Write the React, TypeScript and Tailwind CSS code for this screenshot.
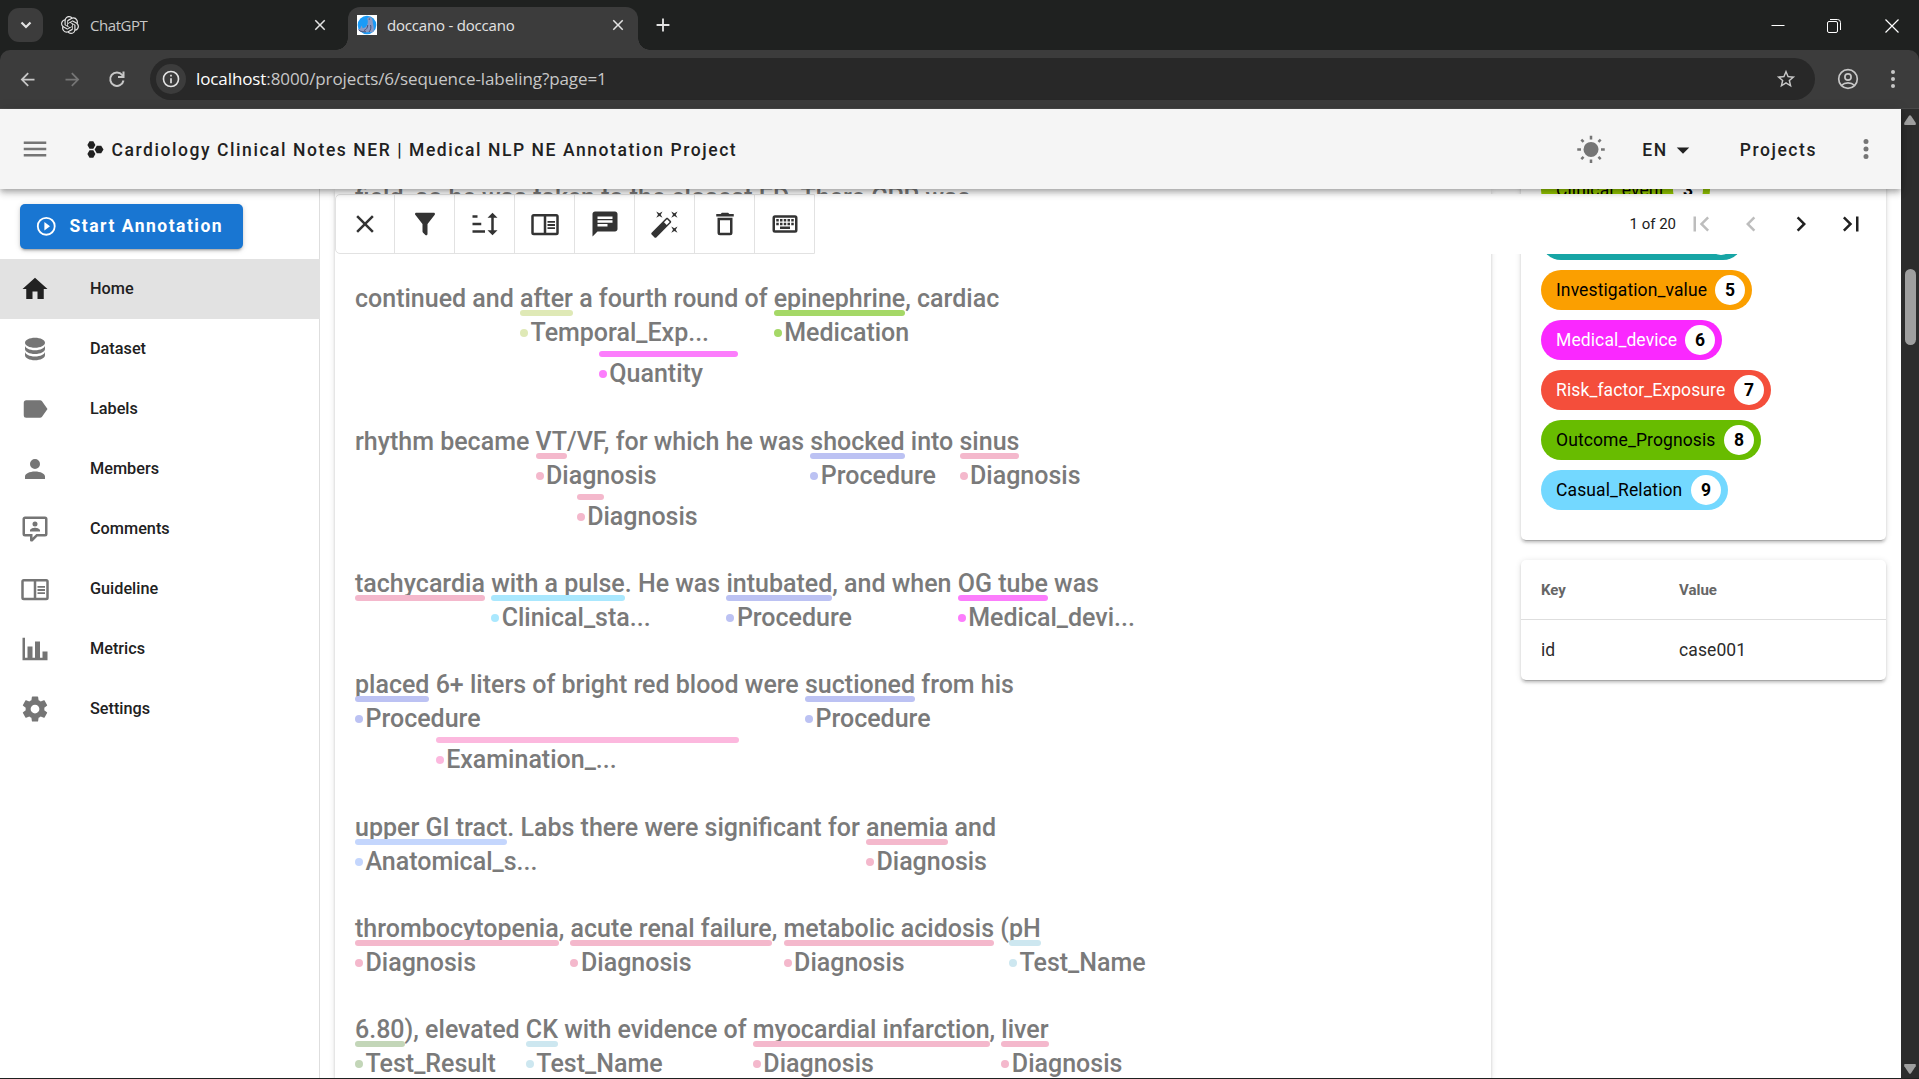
import React from "react";

const P = {
  close: "M19,6.41L17.59,5L12,10.59L6.41,5L5,6.41L10.59,12L5,17.59L6.41,19L12,13.41L17.59,19L19,17.59L13.41,12L19,6.41Z",
  filter: "M14,12V19.88C14.04,20.18 13.94,20.5 13.71,20.71C13.32,21.1 12.69,21.1 12.3,20.71L10.29,18.7C10.06,18.47 9.96,18.16 10,17.87V12H9.97L4.21,4.62C3.87,4.19 3.95,3.56 4.38,3.22C4.57,3.08 4.78,3 5,3H19C19.22,3 19.43,3.08 19.62,3.22C20.05,3.56 20.13,4.19 19.79,4.62L14.03,12H14Z",
  sort: "M18 21L14 17H17V7H14L18 3L22 7H19V17H22M2 19V17H12V19M2 13V11H9V13M2 7V5H6V7H2Z",
  book: "M21,4H3A2,2 0 0,0 1,6V19A2,2 0 0,0 3,21H21A2,2 0 0,0 23,19V6A2,2 0 0,0 21,4M3,19V6H11V19H3M21,19H13V6H21V19M14,9.5H20V11H14V9.5M14,12H20V13.5H14V12M14,14.5H20V16H14V14.5Z",
  message: "M20 2H4C2.9 2 2 2.9 2 4V22L6 18H20C21.1 18 22 17.1 22 16V4C22 2.9 21.1 2 20 2M6 9H18V11H6M14 14H6V12H14M18 8H6V6H18",
  fix: "M7.5,5.6L5,7L6.4,4.5L5,2L7.5,3.4L10,2L8.6,4.5L10,7L7.5,5.6M19.5,15.4L22,14L20.6,16.5L22,19L19.5,17.6L17,19L18.4,16.5L17,14L19.5,15.4M22,2L20.6,4.5L22,7L19.5,5.6L17,7L18.4,4.5L17,2L19.5,3.4L22,2M13.34,12.78L15.78,10.34L13.66,8.22L11.22,10.66L13.34,12.78M14.37,7.29L16.71,9.63C17.1,10 17.1,10.65 16.71,11.04L5.04,22.71C4.65,23.1 4,23.1 3.63,22.71L1.29,20.37C0.9,20 0.9,19.35 1.29,18.96L12.96,7.29C13.35,6.9 14,6.9 14.37,7.29Z",
  trash: "M6,19A2,2 0 0,0 8,21H16A2,2 0 0,0 18,19V7H6V19M8,9H16V19H8V9M15.5,4L14.5,3H9.5L8.5,4H5V6H19V4H15.5Z",
  keyboard: "M4,5A2,2 0 0,0 2,7V17A2,2 0 0,0 4,19H20A2,2 0 0,0 22,17V7A2,2 0 0,0 20,5H4M4,7H20V17H4V7M5,8V10H7V8H5M8,8V10H10V8H8M11,8V10H13V8H11M14,8V10H16V8H14M17,8V10H19V8H17M5,11V13H7V11H5M8,11V13H10V11H8M11,11V13H13V11H11M14,11V13H16V11H14M17,11V13H19V11H17M8,14V16H16V14H8Z",
  database: "M12,3C7.58,3 4,4.79 4,7C4,9.21 7.58,11 12,11C16.42,11 20,9.21 20,7C20,4.79 16.42,3 12,3M4,9V12C4,14.21 7.58,16 12,16C16.42,16 20,14.21 20,12V9C20,11.21 16.42,13 12,13C7.58,13 4,11.21 4,9M4,14V17C4,19.21 7.58,21 12,21C16.42,21 20,19.21 20,17V14C20,16.21 16.42,18 12,18C7.58,18 4,16.21 4,14Z",
  label: "M17.63,5.84C17.27,5.33 16.67,5 16,5H5A2,2 0 0,0 3,7V17A2,2 0 0,0 5,19H16C16.67,19 17.27,18.66 17.63,18.15L22,12L17.63,5.84Z",
  account: "M12,4A4,4 0 0,1 16,8A4,4 0 0,1 12,12A4,4 0 0,1 8,8A4,4 0 0,1 12,4M12,14C16.42,14 20,15.79 20,18V20H4V18C4,15.79 7.58,14 12,14Z",
  comments: "M9,22A1,1 0 0,1 8,21V18H4A2,2 0 0,1 2,16V4C2,2.89 2.9,2 4,2H20A2,2 0 0,1 22,4V16A2,2 0 0,1 20,18H13.9L10.2,21.71C10,21.9 9.75,22 9.5,22H9M10,16V19.08L13.08,16H20V4H4V16H10M16,14H8V13C8,11.67 10.67,11 12,11C13.33,11 16,11.67 16,13V14M12,6A2,2 0 0,1 14,8A2,2 0 0,1 12,10A2,2 0 0,1 10,8A2,2 0 0,1 12,6Z",
  chart: "M22,21H2V3H4V19H6V10H10V19H12V6H16V19H18V14H22V21Z",
  cog: "M12,15.5A3.5,3.5 0 0,1 8.5,12A3.5,3.5 0 0,1 12,8.5A3.5,3.5 0 0,1 15.5,12A3.5,3.5 0 0,1 12,15.5M19.43,12.97C19.47,12.65 19.5,12.33 19.5,12C19.5,11.67 19.47,11.34 19.43,11L21.54,9.37C21.73,9.22 21.78,8.95 21.66,8.73L19.66,5.27C19.54,5.05 19.27,4.96 19.05,5.05L16.56,6.05C16.04,5.66 15.5,5.32 14.87,5.07L14.5,2.42C14.46,2.18 14.25,2 14,2H10C9.75,2 9.54,2.18 9.5,2.42L9.13,5.07C8.5,5.32 7.96,5.66 7.44,6.05L4.95,5.05C4.73,4.96 4.46,5.05 4.34,5.27L2.34,8.73C2.21,8.95 2.27,9.22 2.46,9.37L4.57,11C4.53,11.34 4.5,11.67 4.5,12C4.5,12.33 4.53,12.65 4.57,12.97L2.46,14.63C2.27,14.78 2.21,15.05 2.34,15.27L4.34,18.73C4.46,18.95 4.73,19.03 4.95,18.95L7.44,17.94C7.96,18.34 8.5,18.68 9.13,18.93L9.5,21.58C9.54,21.82 9.75,22 10,22H14C14.25,22 14.46,21.82 14.5,21.58L14.87,18.93C15.5,18.67 16.04,18.34 16.56,17.94L19.05,18.95C19.27,19.03 19.54,18.95 19.66,18.73L21.66,15.27C21.78,15.05 21.73,14.78 21.54,14.63L19.43,12.97Z",
  home: "M10,20V14H14V20H19V12H22L12,3L2,12H5V20H10Z",
  play: "M12,20C7.59,20 4,16.41 4,12C4,7.59 7.59,4 12,4C16.41,4 20,7.59 20,12C20,16.41 16.41,20 12,20M12,2A10,10 0 0,0 2,12A10,10 0 0,0 12,22A10,10 0 0,0 22,12A10,10 0 0,0 12,2M10,16.5L16,12L10,7.5V16.5Z",
  sun: "M3.55,18.54L4.96,19.95L6.76,18.16L5.34,16.74M11,22.45H13V19.5H11M12,5.5A6,6 0 0,0 6,11.5A6,6 0 0,0 12,17.5A6,6 0 0,0 18,11.5C18,8.18 15.31,5.5 12,5.5M20,12.5H23V10.5H20M17.24,18.16L19.04,19.95L20.45,18.54L18.66,16.74M20.45,4.46L19.04,3.05L17.24,4.84L18.66,6.26M13,0.55H11V3.5H13M4,10.5H1V12.5H4M6.76,4.84L4.96,3.05L3.55,4.46L5.34,6.26L6.76,4.84Z",
  menu: "M3,6H21V8H3V6M3,11H21V13H3V11M3,16H21V18H3V16Z",
  menuDown: "M7,10L12,15L17,10H7Z",
  dots: "M12,16A2,2 0 0,1 14,18A2,2 0 0,1 12,20A2,2 0 0,1 10,18A2,2 0 0,1 12,16M12,10A2,2 0 0,1 14,12A2,2 0 0,1 12,14A2,2 0 0,1 10,12A2,2 0 0,1 12,10M12,4A2,2 0 0,1 14,6A2,2 0 0,1 12,8A2,2 0 0,1 10,6A2,2 0 0,1 12,4Z",
  first: "M18.41,16.59L13.82,12L18.41,7.41L17,6L11,12L17,18L18.41,16.59M6,6H8V18H6V6Z",
  last: "M5.59,7.41L10.18,12L5.59,16.59L7,18L13,12L7,6L5.59,7.41M16,6H18V18H16V6Z",
  left: "M15.41,16.58L10.83,12L15.41,7.41L14,6L8,12L14,18L15.41,16.58Z",
  right: "M8.59,16.58L13.17,12L8.59,7.41L10,6L16,12L10,18L8.59,16.58Z",
  back: "M20,11V13H8L13.5,18.5L12.08,19.92L4.16,12L12.08,4.08L13.5,5.5L8,11H20Z",
  forward: "M4,11V13H16L10.5,18.5L11.92,19.92L19.84,12L11.92,4.08L10.5,5.5L16,11H4Z",
  info: "M11,9H13V7H11M12,20C7.59,20 4,16.41 4,12C4,7.59 7.59,4 12,4C16.41,4 20,7.59 20,12C20,16.41 16.41,20 12,20M12,2A10,10 0 0,0 2,12A10,10 0 0,0 12,22A10,10 0 0,0 22,12A10,10 0 0,0 12,2M11,17H13V11H11V17Z",
  star: "M12,15.39L8.24,17.66L9.23,13.38L5.91,10.5L10.29,10.13L12,6.09L13.71,10.13L18.09,10.5L14.77,13.38L15.76,17.66M22,9.24L14.81,8.63L12,2L9.19,8.63L2,9.24L7.45,13.97L5.82,21L12,17.27L18.18,21L16.54,13.97L22,9.24Z",
  plus: "M19,13H13V19H11V13H5V11H11V5H13V11H19V13Z",
};

function Icon({ d, className = "size-[30px]" }: { d: string; className?: string }) {
  return (
    <svg viewBox="0 0 24 24" fill="currentColor" className={"shrink-0 " + className}>
      <path d={d} />
    </svg>
  );
}

type Ann = { label: string; bar: string; level: number; tight: boolean };
type Part = string | { text: string; ann: Ann };

const DIAG = "bg-[#f4b8cc]";
const PROC = "bg-[#bcc2f3]";
const TEST = "bg-[#cde7f0]";
const mark = (text: string, label: string, bar: string, level = 1, tight = false): Part => ({
  text,
  ann: { label, bar, level, tight },
});

const lines: { h: string; parts: Part[] }[] = [
  { h: "h-[101px]", parts: ["field, so he was taken to the closest ED. There CPR was"] },
  {
    h: "h-[143px]",
    parts: [
      "continued and ",
      mark("after", "Temporal_Exp...", "bg-[#dfe9b6]"),
      " a ",
      mark("fourth round", "Quantity", "bg-[#fc7dfc]", 2),
      " of ",
      mark("epinephrine", "Medication", "bg-[#a5d867]"),
      ", cardiac",
    ],
  },
  {
    h: "h-[142px]",
    parts: [
      "rhythm became ",
      mark("VT", "Diagnosis", DIAG),
      "/",
      mark("VF", "Diagnosis", DIAG, 2, true),
      ", for which he was ",
      mark("shocked", "Procedure", PROC),
      " into ",
      mark("sinus", "Diagnosis", DIAG),
    ],
  },
  {
    h: "h-[101px]",
    parts: [
      mark("tachycardia", "", DIAG),
      " ",
      mark("with a pulse", "Clinical_sta...", "bg-[#aae8fe]"),
      ". He was ",
      mark("intubated", "Procedure", PROC),
      ", and when ",
      mark("OG tube", "Medical_devi...", "bg-[#fc7dfc]"),
      " was",
    ],
  },
  {
    h: "h-[143px]",
    parts: [
      mark("placed", "Procedure", PROC),
      " ",
      mark("6+ liters of bright red blood", "Examination_...", "bg-[#fcb8de]", 2),
      " were ",
      mark("suctioned", "Procedure", PROC),
      " from his",
    ],
  },
  {
    h: "h-[101px]",
    parts: [
      mark("upper GI tract", "Anatomical_s...", "bg-[#c4d6fd]"),
      ". Labs there were significant for ",
      mark("anemia", "Diagnosis", DIAG),
      " and",
    ],
  },
  {
    h: "h-[101px]",
    parts: [
      mark("thrombocytopenia", "Diagnosis", DIAG),
      ", ",
      mark("acute renal failure", "Diagnosis", DIAG),
      ", ",
      mark("metabolic acidosis", "Diagnosis", DIAG),
      " (",
      mark("pH", "Test_Name", TEST),
    ],
  },
  {
    h: "h-[101px]",
    parts: [
      mark("6.80", "Test_Result", "bg-[#c3d6b8]"),
      "), elevated ",
      mark("CK", "Test_Name", TEST),
      " with evidence of ",
      mark("myocardial infarction", "Diagnosis", DIAG),
      ", ",
      mark("liver", "Diagnosis", DIAG),
    ],
  },
];

function Line({ h, parts }: { h: string; parts: Part[] }) {
  return (
    <div className={"whitespace-pre " + h}>
      {parts.map((p, i) =>
        typeof p === "string" ? (
          <span key={i}>{p}</span>
        ) : (
          <span key={i} className={"relative " + (p.ann.tight ? "-mr-[2.750px]" : "")}>
            {p.text}
            <span
              className={
                "absolute left-0 h-[6px] rounded-full " +
                p.ann.bar +
                (p.ann.level === 2 ? " top-[67px]" : " top-[26px]") +
                (p.ann.tight ? " right-[2.750px]" : " right-0")
              }
            />
            {p.ann.label && (
              <span className={"absolute left-0 flex items-center gap-[2.500px] " + (p.ann.level === 2 ? "top-[75px]" : "top-[34px]")}>
                <span className={"mb-[1px] size-[8px] rounded-full " + p.ann.bar} />
                <span>{p.ann.label}</span>
              </span>
            )}
          </span>
        )
      )}
    </div>
  );
}

const chips = [
  { t: "Clinical_event", n: 3, c: "bg-[#96c800] text-black w-[169px]" },
  { t: "", n: 4, c: "bg-[#17a5a5] text-white w-[202px] justify-end" },
  { t: "Investigation_value", n: 5, c: "bg-[#fb9f00] text-black w-[211px]" },
  { t: "Medical_device", n: 6, c: "bg-[#fa28ff] text-white w-[181px]" },
  { t: "Risk_factor_Exposure", n: 7, c: "bg-[#f44e3b] text-white w-[230px]" },
  { t: "Outcome_Prognosis", n: 8, c: "bg-[#68bc00] text-black w-[220px]" },
  { t: "Casual_Relation", n: 9, c: "bg-[#73d8ff] text-black w-[187px]" },
];

const nav = [
  ["Home", P.home],
  ["Dataset", P.database],
  ["Labels", P.label],
  ["Members", P.account],
  ["Comments", P.comments],
  ["Guideline", P.book],
  ["Metrics", P.chart],
  ["Settings", P.cog],
];

const tools = [P.close, P.filter, P.sort, P.book, P.message, P.fix, P.trash, P.keyboard];

const cardShadow =
  "shadow-[0_4px_1px_-3px_rgba(0,0,0,.2),0_2.5px_2.5px_0_rgba(0,0,0,.14),0_1px_6px_0_rgba(0,0,0,.12)]";

function ChatLogo() {
  return (
    <svg viewBox="0 0 24 24" className="size-[18px] text-[#e3e3e3]" fill="currentColor">
      <path d="M22.28 9.82a5.98 5.98 0 0 0-.52-4.91 6.05 6.05 0 0 0-6.51-2.9A6.07 6.07 0 0 0 4.98 4.18a5.98 5.98 0 0 0-4 2.9 6.05 6.05 0 0 0 .74 7.1 5.98 5.98 0 0 0 .51 4.91 6.05 6.05 0 0 0 6.51 2.9A5.98 5.98 0 0 0 13.26 24a6.06 6.06 0 0 0 5.77-4.21 5.99 5.99 0 0 0 4-2.9 6.06 6.06 0 0 0-.75-7.07zm-9.02 12.61a4.48 4.48 0 0 1-2.88-1.04l.14-.08 4.78-2.76a.79.79 0 0 0 .39-.68v-6.74l2.02 1.17a.07.07 0 0 1 .04.05v5.58a4.5 4.5 0 0 1-4.49 4.5zM3.6 18.3a4.47 4.47 0 0 1-.54-3.01l.14.08 4.78 2.76a.77.77 0 0 0 .78 0l5.84-3.37v2.33a.08.08 0 0 1-.03.06L9.74 19.95A4.5 4.5 0 0 1 3.6 18.3zM2.34 7.9a4.49 4.49 0 0 1 2.37-1.97v5.67a.77.77 0 0 0 .39.68l5.81 3.35-2.02 1.17a.08.08 0 0 1-.07 0l-4.83-2.79A4.5 4.5 0 0 1 2.34 7.87zm16.6 3.86-5.84-3.39L15.12 7.2a.08.08 0 0 1 .07 0l4.83 2.79a4.49 4.49 0 0 1-.68 8.1v-5.67a.79.79 0 0 0-.4-.66zm2.01-3.03-.14-.08-4.77-2.78a.78.78 0 0 0-.79 0L9.41 9.23V6.9a.07.07 0 0 1 .03-.06l4.83-2.79a4.5 4.5 0 0 1 6.68 4.66zM8.31 12.86l-2.02-1.16a.08.08 0 0 1-.04-.06V6.07a4.5 4.5 0 0 1 7.38-3.45l-.14.08-4.78 2.76a.79.79 0 0 0-.39.68zm1.1-2.36 2.6-1.5 2.61 1.5v3l-2.6 1.5-2.61-1.5z" />
    </svg>
  );
}

function DoccanoLogo() {
  return (
    <svg viewBox="0 0 20 20" className="size-[20px] shrink-0 bg-white">
      <circle cx="10" cy="10" r="9.3" fill="#1a9bf7" />
      <path
        d="M10.200 3.600C11 2 14 1.700 15 3.500C15.800 5 15.600 7 16.200 9.500C17 13 17.200 15.500 16 17.200H5.500C3 17 1.200 15.500.8 13.800C2.500 14.300 3.300 14 3.600 12.500L4.800 10.500L5.600 13.300C8.500 12.800 10 11 10.600 8.500C11 6.500 10.800 5 10.200 3.600Z"
        fill="#8a9ac4"
      />
      <path d="M10.800 10C10.500 13 9.500 14.500 7 15.500M13.500 10C14.500 12.500 13.500 15 12 17M2 15.200C4 16.800 6 16.800 9 16.800" fill="none" stroke="#47547f" />
      <circle cx="12.300" cy="4" r=".6" fill="#2b3350" />
    </svg>
  );
}

function Chrome() {
  return (
    <div className="shrink-0 bg-[#1f2120] font-['Open_Sans','Noto_Sans',sans-serif] text-[#e3e3e3]">
      <div className="flex h-[50px] items-end">
        <div className="mb-[8px] ml-[8px] flex h-[34px] w-[35px] items-center justify-center rounded-[11px] bg-[#3c3c3c]">
          <svg viewBox="0 0 12 12" className="size-[12px]" fill="none" stroke="currentColor" strokeWidth="2.200">
            <path d="M1.500 3.500 6 8l4.500-4.500" />
          </svg>
        </div>
        <div className="flex h-[42px] w-[305px] items-center pl-[18px]">
          <div className="mb-[8px] flex w-full items-center">
            <ChatLogo />
            <span className="ml-[11px] grow text-[15px] tracking-[-0.450px] text-[#c7c7c7]">ChatGPT</span>
            <Icon d={P.close} className="mr-[19px] size-[18px]" />
          </div>
        </div>
        <div className="relative flex h-[43px] w-[290px] items-center rounded-t-[12px] bg-[#3c3c3c] pl-[9px]">
          <span className="absolute bottom-0 -left-[12px] size-[12px] bg-[radial-gradient(circle_at_0_0,transparent_11.500px,#3c3c3c_12px)]" />
          <span className="absolute -right-[12px] bottom-0 size-[12px] bg-[radial-gradient(circle_at_100%_0,transparent_11.500px,#3c3c3c_12px)]" />
          <div className="mb-[7px] flex w-full items-center">
            <DoccanoLogo />
            <span className="ml-[10px] grow text-[15px] tracking-[-0.200px]">doccano - doccano</span>
            <Icon d={P.close} className="mr-[11px] size-[18px]" />
          </div>
        </div>
        <Icon d={P.plus} className="mb-[14px] ml-[14px] size-[22px]" />
        <div className="mb-[17px] ml-auto flex items-center text-white">
          <svg viewBox="0 0 14 14" className="size-[14px]" stroke="currentColor" fill="none">
            <path d="M0.500 6.500h13" />
          </svg>
          <svg viewBox="0 0 14 14" className="ml-[42px] size-[14px]" stroke="currentColor" fill="none">
            <rect x=".5" y="2.500" width="10" height="11" rx="1.500" />
            <path d="M3 .5h7.500a3 3 0 0 1 3 3V11" />
          </svg>
          <svg viewBox="0 0 14 14" className="mr-[20px] ml-[44px] size-[14px]" stroke="currentColor" strokeWidth="1.200" fill="none">
            <path d="M.5.5l13 13M13.500.5l-13 13" />
          </svg>
        </div>
      </div>
      <div className="flex h-[59px] items-center rounded-t-[10px] border-b border-[#484848] bg-[#3c3c3c] text-[#c7c7c7]">
        <Icon d={P.back} className="ml-[17px] size-[21px]" />
        <Icon d={P.forward} className="ml-[24px] size-[21px] text-[#757575]" />
        <svg viewBox="0 0 22 22" className="ml-[23px] size-[22px]" fill="none" stroke="currentColor" strokeWidth="2">
          <path d="M17.500 12.500A6.700 6.700 0 1 1 16.200 7L17.500 8.500" />
          <path d="M17.500 3.500V9H12" />
        </svg>
        <div className="ml-[22px] flex h-[42px] w-[1665px] items-center rounded-full bg-[#282828] pl-[6px]">
          <span className="flex size-[30px] items-center justify-center rounded-full bg-[#3c3c3c] text-[#e3e3e3]">
            <Icon d={P.info} className="size-[20px]" />
          </span>
          <span className="ml-[10px] grow text-[17px] tracking-[-0.100px]">
            <span className="text-white">localhost</span>:8000/projects/6/sequence-labeling?page=1
          </span>
          <Icon d={P.star} className="mr-[18px] size-[22px]" />
        </div>
        <svg viewBox="0 0 22 22" className="ml-[22px] size-[22px]" fill="none" stroke="currentColor" strokeWidth="1.700">
          <circle cx="11" cy="11" r="9.300" />
          <circle cx="11" cy="9" r="3.100" />
          <path d="M4.500 17.300c3.500-3.200 9.500-3.200 13 0" />
        </svg>
        <svg viewBox="0 0 22 22" className="ml-[23px] size-[22px]" fill="currentColor">
          <circle cx="11" cy="4" r="2" />
          <circle cx="11" cy="11" r="2" />
          <circle cx="11" cy="18" r="2" />
        </svg>
      </div>
    </div>
  );
}

function AppBar() {
  return (
    <div className="relative z-20 flex h-[80px] shrink-0 items-center bg-[#f5f5f5] text-[17.500px] font-medium tracking-[1.5625px] text-[#212121] shadow-[0_2.500px_5px_-1px_rgba(0,0,0,.2),0_5px_6px_0_rgba(0,0,0,.14),0_1px_12px_0_rgba(0,0,0,.12)]">
      <Icon d={P.menu} className="ml-[20px] size-[30px] text-[#757575]" />
      <svg viewBox="0 0 22 22" className="mt-[2px] ml-[36px] size-[22px]" fill="currentColor">
        <path d="M3.500 2.200H7.300L9.400 6 7.300 9.700H3.500L1.400 6zM3.500 11.300H7.300L9.400 15 7.300 18.800H3.500L1.400 15zM10.800 6.800H15.200L17.500 10.500 15.200 14.300H10.800L8.600 10.500z" />
      </svg>
      <span className="ml-[3.500px] pt-[2px]">Cardiology Clinical Notes NER | Medical NLP NE Annotation Project</span>
      <Icon d={P.sun} className="mt-[1px] ml-auto size-[30px] text-[#757575]" />
      <span className="ml-[36px] pt-[2px]">EN</span>
      <Icon d={P.menuDown} className="mt-[1px] ml-[0px] size-[30px]" />
      <span className="ml-[42px] pt-[2px]">Projects</span>
      <Icon d={P.dots} className="mr-[20px] ml-[34px] size-[30px] text-[#757575]" />
    </div>
  );
}

function Sidebar() {
  return (
    <div className="w-[320px] shrink-0 border-r border-[#dedede] pt-[15px]">
      <button className="mb-[10px] ml-[20px] flex h-[45px] w-[223px] items-center rounded-[5px] bg-[#1976d2] pl-[15px] text-[17.500px] font-bold tracking-[1.5px] text-white shadow-[0_3px_2px_-2px_rgba(0,0,0,.2),0_2px_3px_0_rgba(0,0,0,.14),0_1px_6px_0_rgba(0,0,0,.12)]">
        <Icon d={P.play} className="mr-[12px] size-[22.500px]" />
        Start Annotation
      </button>
      {nav.map(([t, d], i) => (
        <div
          key={t}
          className={
            "flex h-[60px] items-center pl-[20px] text-[16.250px] font-medium text-[#212121] " +
            (i === 0 ? "-mr-px bg-[#e2e2e2]" : "")
          }
        >
          <Icon d={d} className={"mr-[40px] size-[30px] " + (i === 0 ? "text-[#212121]" : "text-[#757575]")} />
          {t}
        </div>
      ))}
    </div>
  );
}

export default function App() {
  return (
    <div className="flex h-[1079px] w-[1919px] flex-col overflow-hidden border-b border-[#1f2120] bg-white font-[Roboto,sans-serif]">
      <Chrome />
      <div className="flex min-h-0 grow">
        <div className="flex min-w-0 grow flex-col">
          <AppBar />
          <div className="flex min-h-0 grow">
            <Sidebar />
            <div className="relative flex min-w-0 grow gap-[30px] overflow-hidden px-[15px]">
              <div className={"w-[1156px] shrink-0 overflow-hidden bg-white pl-[20px] text-[25px] leading-[30px] font-medium text-[#7a7a7a] " + cardShadow}>
                <div className="-mt-[6px]">
                  {lines.map((l, i) => (
                    <Line key={i} {...l} />
                  ))}
                </div>
              </div>
              <div className="w-[365px] shrink-0 text-[17.500px]">
                <div className={"-mt-[19px] mb-[20px] flex h-[370px] flex-col gap-[10px] rounded-b-[5px] bg-white pl-[20px] " + cardShadow}>
                  {chips.map((c) => (
                    <div key={c.n} className={"flex h-[40px] shrink-0 items-center rounded-full pr-[7px] pl-[15px] " + c.c}>
                      {c.t && <span className="grow pt-[1px] tracking-[0.110px]">{c.t}</span>}
                      <span className="flex size-[30px] shrink-0 items-center justify-center rounded-full bg-white pt-[1px] font-bold text-black">{c.n}</span>
                    </div>
                  ))}
                </div>
                <div className={"h-[120px] rounded-[5px] bg-white text-[#2b2b2b] " + cardShadow}>
                  <div className="flex h-[60px] items-center border-b border-[#dedede] pt-[1px] pl-[20px] text-[15px] font-bold text-[#666]">
                    <span className="w-[138px]">Key</span>
                    <span>Value</span>
                  </div>
                  <div className="flex h-[60px] items-center pl-[20px]">
                    <span className="w-[138px]">id</span>
                    <span className="tracking-[0.100px]">case001</span>
                  </div>
                </div>
              </div>
              <div className="absolute top-[5px] right-[17px] left-[15px] z-10 flex h-[60px] items-center bg-white">
                <div className="flex rounded-l-[5px] border border-[#e2e2e2] text-[#333]">
                  {tools.map((d, i) => (
                    <span key={i} className={"flex h-[58px] items-center justify-center " + (i === 0 ? "w-[58px]" : "w-[60px] border-l border-[#e2e2e2]")}>
                      <Icon d={d} className="size-[30px]" />
                    </span>
                  ))}
                </div>
                <span className="ml-auto text-[15px] text-[#212121]">1 of 20</span>
                <Icon d={P.first} className="ml-[10px] size-[30px] text-[#bdbdbd]" />
                <Icon d={P.left} className="ml-[20px] size-[30px] text-[#bdbdbd]" />
                <Icon d={P.right} className="ml-[20px] size-[30px] text-[#212121]" />
                <Icon d={P.last} className="mr-[18px] ml-[20px] size-[30px] text-[#212121]" />
              </div>
            </div>
          </div>
        </div>
        <div className="flex w-[18px] shrink-0 flex-col items-center justify-between bg-[#2c2c2c] text-[#9f9f9f]">
          <svg viewBox="0 0 12 10" className="mt-[6px] h-[10px] w-[12px]" fill="currentColor">
            <path d="M5 .8Q6-.4 7 .8l4.700 7Q12.300 9.800 11 10H1Q-.3 9.800.3 7.800z" />
          </svg>
          <span className="mt-[144px] mb-auto h-[76px] w-[11px] rounded-full bg-[#9f9f9f]" />
          <svg viewBox="0 0 12 10" className="mb-[4px] h-[10px] w-[12px] rotate-180" fill="currentColor">
            <path d="M5 .8Q6-.4 7 .8l4.700 7Q12.300 9.800 11 10H1Q-.3 9.800.3 7.800z" />
          </svg>
        </div>
      </div>
    </div>
  );
}
